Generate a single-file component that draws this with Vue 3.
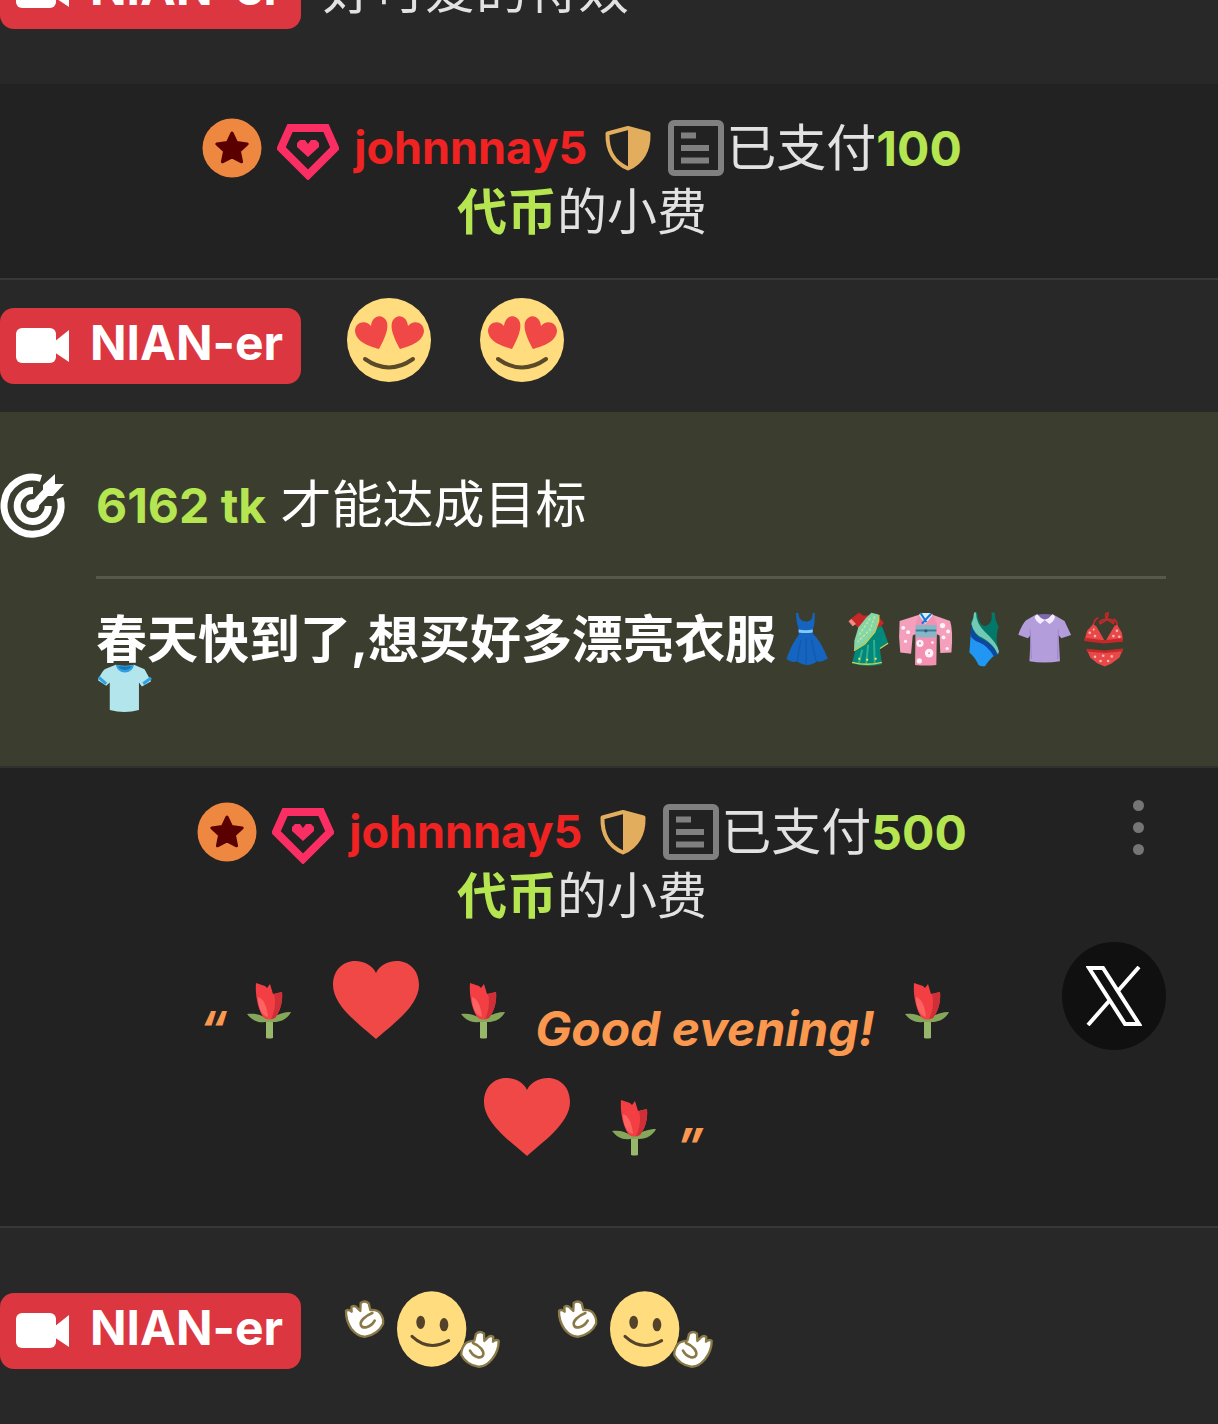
<template>
  <main class="chat">
    <!-- Shared artwork, referenced below through <use> -->
    <svg class="sprite" aria-hidden="true">
      <symbol id="cam" viewBox="0 0 54 36">
        <rect x="0" y="0" width="40" height="35" rx="6" />
        <path d="M38 14 53 2v32L38 24z" />
      </symbol>

      <symbol id="star" viewBox="0 0 60 60">
        <circle cx="30" cy="30" r="29.5" fill="#ee8841" />
        <path
          d="M30 15l4.600 9.600 10.600 1.300-7.800 7.200 2.200 10.700L30 38.800l-9.600 5 2.200-10.700-7.800-7.200 10.600-1.300z"
          fill="#5a0000" stroke="#5a0000" stroke-width="3" stroke-linejoin="round"
        />
      </symbol>

      <symbol id="gem" viewBox="0 0 62 56">
        <path d="M13 4h36l9 20-27 27L4 24z" fill="none" stroke="#fb2e63" stroke-width="8" />
        <path d="M31 33 20 23v-4l3-3h5l3 4 3-4h5l3 3v4z" fill="#fb2e63" />
      </symbol>

      <symbol id="shield" viewBox="0 0 46 46">
        <path d="M23 3 43.500 8.500c.5 16-6 29-20.500 35C8.500 37.500 2 24.500 2.500 8.500z" fill="none" stroke="#e2ae5d" stroke-width="4" stroke-linejoin="round" />
        <path d="M23 2 44 8c.5 17-6 30-21 36z" fill="#e2ae5d" />
      </symbol>

      <symbol id="note" viewBox="0 0 56 56">
        <rect x="3" y="3" width="50" height="50" rx="3" fill="none" stroke="#808080" stroke-width="6" />
        <path d="M13 15.500h15M13 28h28M13 40.500h28" stroke="#808080" stroke-width="6" />
      </symbol>

      <symbol id="love" viewBox="0 0 84 84">
        <circle cx="42" cy="42" r="42" fill="#ffdc7d" />
        <path d="M32 51C22 48 9 44 8 33c0-9 11-12 16-5 1-9 8-12 13-8 8 6 0 22-5 31z" fill="#f04747" />
        <path d="M53 51c10-3 23-7 24-18 0-9-11-12-16-5-1-9-8-12-13-8-8 6 0 22 5 31z" fill="#f04747" />
        <path d="M18 61q24 17 48 0" fill="none" stroke="#5a4a2a" stroke-width="4" stroke-linecap="round" />
      </symbol>

      <symbol id="wave" viewBox="42 58 471 234">
        <ellipse cx="305" cy="175" rx="104" ry="113" fill="#ffdc7d" />
        <ellipse cx="272" cy="155" rx="13" ry="20" fill="#54432a" />
        <ellipse cx="342" cy="162" rx="13" ry="20" fill="#54432a" />
        <path d="M246 197q50 47 110 13" fill="none" stroke="#54432a" stroke-width="9" stroke-linecap="round" />
        <g fill="#fff" stroke="#8a7a48" stroke-width="7" stroke-linejoin="round" stroke-linecap="round">
          <path d="M48 120q8-5 17 3l-1-14q10-7 19 4l8 8 1-24q13-10 24 1l5 20q20-2 29 9 12 15 9 33-14 30-52 38-22 2-42-22-18-26-17-56z" />
          <path d="M134 150c-11 20-35 26-41 14-5-12 12-28 34-37" fill="none" stroke-width="8" />
          <path d="M506 210q-8-5-17 3l1-14q-10-7-19 4l-8 8-1-22q-13-10-24 1l-5 20q-20 2-27 9-13 15-12 34 14 28 50 35 22 2 42-22 21-26 20-56z" />
          <path d="M420 240c11 20 33 26 39 14 5-12-8-28-30-37" fill="none" stroke-width="8" />
        </g>
      </symbol>

      <symbol id="heart" viewBox="0 0 86 78">
        <path d="M43 78C30 66 0 46 0 24 0 9 10 0 22 0c10 0 18 5 21 12C46 5 54 0 64 0c12 0 22 9 22 24 0 22-30 42-43 54z" fill="#f04747" />
      </symbol>

      <symbol id="tulip" viewBox="0 0 44 56">
        <path d="M19 35h7v20q-3.500 1-7 0z" fill="#97b86a" />
        <path d="M0 31c7-1 13 0 20 5l4 0c6-5 13-7 20-7-3 6-9 10-17 10h-9C10 40 5 37 0 31z" fill="#85a75a" />
        <path d="M9 0l9 3 2 2 3-4 3 10 9-2c1 10-2 20-7 26q-5 3-11 0C11 27 8 12 9 0z" fill="#f33f43" />
        <path d="M27 11l8-2c1 10-2 20-7 26l-4 1c4-8 5-17 3-25z" fill="#cf3038" />
        <path d="M11 14c6 2 9 10 10 20-7-2-10-10-10-20z" fill="#ff6262" />
      </symbol>

      <symbol id="goal" viewBox="0 0 66 66">
        <g fill="none" stroke="#fff">
          <path d="M41 6.400A28.500 28.500 0 1 0 60 26" stroke-width="7" />
          <path d="M33 18.500A15.500 15.500 0 1 0 48.200 34" stroke-width="7" />
          <path d="M33 34 50 16" stroke-width="8" />
        </g>
        <circle cx="32.700" cy="33.700" r="6.500" fill="#fff" />
        <path d="M43 13 55 2v10h9L53 24H43z" fill="#fff" />
      </symbol>

      <symbol id="dress" viewBox="33 63 183 174">
        <path d="M94 68h7c2 20 10 25 24 26 14-1 20-6 20-26h6c0 20 0 35-5 48l-1 14c20 20 34 45 46 77-14 6-20 12-33 8-20 16-40 15-60 0-13 5-23 0-33-7 12-33 20-50 38-75l-2-20c-5-15-6-28-7-45z" fill="#1565c0" />
        <path d="M109 150 98 212M125 145v80M141 150l14 64" stroke="#1259ad" stroke-width="4" fill="none" />
        <path d="M102 118q22 4 43 0v9q-21 4-43 0z" fill="#81c9fa" />
      </symbol>

      <symbol id="sari" viewBox="216 63 183 174">
        <path d="M256 90 286 66 300 76 340 72 362 98 350 112 300 130 276 104z" fill="#c62828" />
        <path d="M254 93 267 108 277 101 263 86z" fill="#f28b82" />
        <path d="M290 150 340 112 356 108 364 128 375 160 350 178 356 224Q310 236 265 222L276 176z" fill="#00897b" />
        <path d="M296 180 286 220M314 165 308 224M332 150 334 222" stroke="#35ae8f" stroke-width="6" />
        <path d="M308 82 324 67 346 72 346 92 334 124 304 160 271 182 272 152 284 112z" fill="#86d5a6" />
        <path d="M334 78 320 118 282 156M320 84 302 112 284 138" stroke="#b9e6a6" stroke-width="5" stroke-dasharray="8 5" fill="none" />
        <path d="M347 74 346 94 334 126 304 162 271 183M265 218Q310 230 356 218M350 176 375 160" stroke="#d3cf4a" stroke-width="4" fill="none" />
        <path d="M284 207h6M308 210h6M334 207h6" stroke="#f2e25a" stroke-width="6" />
      </symbol>

      <symbol id="kimono" viewBox="399 63 183 174">
        <path d="M472 72 410 92Q406 140 412 188L445 192 450 136 462 130zM508 72 564 92Q574 120 568 188L534 190 532 136 518 130z" fill="#f4a0bd" />
        <path d="M470 70 490 74 510 70 524 100 522 226Q490 230 457 226L459 100z" fill="#f291b2" />
        <path d="M474 68H504L510 75 489 101 470 76z" fill="#d6eef8" />
        <path d="M474 68 492 96M506 70 478 100" stroke="#1976d2" stroke-width="6" />
        <path d="M459 104h63v38h-63z" fill="#87b6c9" />
        <path d="M459 121h63" stroke="#407d96" stroke-width="6" />
        <circle cx="490" cy="122" r="5" fill="#2b6076" />
        <g fill="#fff3f7">
          <circle cx="421" cy="113" r="6" /><circle cx="436" cy="126" r="6" /><circle cx="428" cy="154" r="5" />
          <circle cx="541" cy="106" r="8" /><circle cx="558" cy="124" r="6" /><circle cx="544" cy="142" r="6" />
          <circle cx="472" cy="160" r="11" /><circle cx="500" cy="190" r="13" /><circle cx="470" cy="214" r="8" />
          <circle cx="510" cy="158" r="4" /><circle cx="555" cy="176" r="5" />
        </g>
        <g fill="#ee7fa5">
          <circle cx="472" cy="160" r="3" /><circle cx="500" cy="190" r="3" />
        </g>
      </symbol>

      <symbol id="swim" viewBox="582 63 183 174">
        <path d="M637 66h10c2 20 6 37 23 42 18-5 24-20 20-42h10q2 30 12 42-10 30-4 58l5 18q-30 25-42 45-10 3-20-3-12-25-28-38l4-42q7-36 0-50 9-14 10-30z" fill="#00796b" />
        <path d="M627 130q28 12 50 30l30 30q-26 22-36 39-10 3-20-3-12-25-28-38z" fill="#2196f3" />
        <path d="M628 104q9 32 35 44 32 14 47 48l-12 5q-20-34-45-43-20-8-27-22z" fill="#0d47a1" />
        <path d="M637 66h6q0 32 26 58 40 36 44 61l-3 9q-14-32-45-49-28-12-36-44 8-17 8-35z" fill="#74c9b5" />
      </symbol>

      <symbol id="polo" viewBox="765 63 183 174">
        <path d="M825 73q28 8 55 0l33 19 20 43-30 10-8-10 4 80q-48 8-93 0l4-80-9 10-29-11q12-34 24-44z" fill="#b39ddb" />
        <path d="M808 118l4 90M894 118l-2 90" stroke="#9c84c8" stroke-width="3" />
        <path d="M827 74q25-6 52 0l-5 12h-42z" fill="#7e69ad" />
        <path d="M829 71q10 13 24 18l-14 12q-14-7-17-21zM877 71q-10 13-24 18l14 12q14-7 17-21z" fill="#f5edff" />
      </symbol>

      <symbol id="bikini" viewBox="948 63 183 174">
        <path d="M1000 106Q1004 86 1016 82M1074 106Q1072 90 1062 86M1042 88 1022 100Q1014 90 1042 86L1062 100Q1068 88 1042 86L1046 68Q1034 66 1040 84" fill="none" stroke="#c62828" stroke-width="5" />
        <path d="M1000 102 1010 108 1034 150 974 150 982 122zM1066 106 1074 104 1088 128 1091 150 1040 150z" fill="#e84848" />
        <path d="M974 148 1032 156 1091 150" stroke="#c62828" stroke-width="10" fill="none" />
        <path d="M980 178 1036 184 1092 177 1080 204 1056 222 1036 231 1014 222 992 204z" fill="#e84848" />
        <path d="M981 181 1036 186 1091 180" stroke="#c62828" stroke-width="8" fill="none" />
        <g fill="#ffb3b3">
          <circle cx="990" cy="128" r="4" /><circle cx="1006" cy="138" r="4" /><circle cx="1002" cy="118" r="3" />
          <circle cx="1062" cy="138" r="4" /><circle cx="1073" cy="122" r="4" /><circle cx="1080" cy="140" r="4" />
          <circle cx="1006" cy="201" r="4" /><circle cx="1031" cy="198" r="4" /><circle cx="1057" cy="200" r="4" />
          <circle cx="1023" cy="214" r="4" /><circle cx="1046" cy="214" r="4" />
        </g>
      </symbol>

      <symbol id="tee" viewBox="288 602 183 174">
        <path d="M348 612q28 8 56 0l32 14 20 36-28 16-9-12v84q-44 12-89 0v-84l-11 10-25-17q14-32 24-35z" fill="#b3e5ec" />
        <path d="M296 650 319 670M456 652 432 670" stroke="#29a3e3" stroke-width="9" />
        <path d="M348 612q28 6 56 0-4 22-28 24-23-2-28-24z" fill="#2f9fe0" />
        <path d="M356 616q20 4 40 0-4 11-20 12-16-1-20-12z" fill="#1976b8" />
      </symbol>
    </svg>

    <article class="message message--tall message--first">
      <button class="badge" type="button">
        <svg class="badge-icon"><use href="#cam" /></svg>
        <span class="badge-name">{{ host }}</span>
      </button>
      <p class="message-text">好可爱的特效</p>
    </article>

    <template v-for="tip in tips" :key="tip.amount">
      <article class="tip">
        <p class="tip-line">
          <svg class="icon-star"><use href="#star" /></svg>
          <svg class="icon-gem"><use href="#gem" /></svg>
          <a class="tip-user" href="#">{{ tip.user }}</a>
          <svg class="icon-shield"><use href="#shield" /></svg>
          <svg class="icon-note"><use href="#note" /></svg>
          <span>已支付<b class="tokens">{{ tip.amount }}</b></span>
        </p>
        <p class="tip-line"><b class="tokens tokens--word">代币</b>的小费</p>

        <div v-if="tip.note" class="quote">
          <p class="quote-line quote-line--first">
            <span>“</span>
            <svg class="tulip quote-tulip"><use href="#tulip" /></svg>
            <svg class="heart"><use href="#heart" /></svg>
            <svg class="tulip"><use href="#tulip" /></svg>
            <span class="quote-text">{{ tip.note }}</span>
            <svg class="tulip"><use href="#tulip" /></svg>
          </p>
          <p class="quote-line quote-line--last">
            <svg class="heart"><use href="#heart" /></svg>
            <svg class="tulip"><use href="#tulip" /></svg>
            <span class="quote-end">”</span>
          </p>
        </div>

        <template v-if="tip.note">
          <button class="menu" type="button" aria-label="Menu">
            <i class="menu-dot" v-for="n in 3" :key="n"></i>
          </button>
          <button class="share" type="button" aria-label="X">
            <svg class="share-icon" viewBox="0 0 56 60">
              <path d="M3 2h14l36 56H39z" fill="none" stroke="#fff" stroke-width="4" />
              <path d="M53 1 31 26M24 34 2 59" stroke="#fff" stroke-width="4" />
            </svg>
          </button>
        </template>
      </article>

      <template v-if="!tip.note">
        <article class="message">
          <button class="badge" type="button">
            <svg class="badge-icon"><use href="#cam" /></svg>
            <span class="badge-name">{{ host }}</span>
          </button>
          <div class="loves">
            <svg class="love" v-for="n in 2" :key="n"><use href="#love" /></svg>
          </div>
        </article>

        <section class="goal">
          <svg class="goal-icon"><use href="#goal" /></svg>
          <div class="goal-body">
            <p class="goal-left"><b class="tokens">6162 tk</b> 才能达成目标</p>
            <hr class="goal-rule" />
            <h2 class="goal-title">春天快到了,想买好多漂亮衣服<svg v-for="c in clothes" :key="c" class="cloth"><use :href="'#' + c" /></svg></h2>
          </div>
        </section>
      </template>
    </template>

    <article class="message message--tall">
      <button class="badge" type="button">
        <svg class="badge-icon"><use href="#cam" /></svg>
        <span class="badge-name">{{ host }}</span>
      </button>
      <div class="waves">
        <svg class="wave" v-for="n in 2" :key="n"><use href="#wave" /></svg>
      </div>
    </article>
  </main>
</template>

<script setup>
const host = 'NIAN-er'

const tips = [
  { user: 'johnnnay5', amount: 100 },
  { user: 'johnnnay5', amount: 500, note: 'Good evening!' },
]

const clothes = ['dress', 'sari', 'kimono', 'swim', 'polo', 'bikini', 'tee']
</script>

<style>
body {
  margin: 0;
  background: #282828;
}
</style>

<style scoped>
.chat {
  overflow: hidden;
  background: #282828;
  color: #e2e2e2;
  font-family: Inter, 'Noto Sans CJK SC', sans-serif;
  font-size: 50px;
  line-height: 64px;
}

.sprite {
  position: absolute;
  width: 0;
  height: 0;
}

p, h2 { margin: 0; }
svg { flex-shrink: 0; }

button {
  border: 0;
  padding: 0;
  font: inherit;
  cursor: pointer;
}

/* short line box, so the smaller digits don't stretch their row */
.tokens {
  color: #b5e550;
  font-size: 48px;
  font-weight: 700;
  line-height: 48px;
}
.tokens--word {
  font-size: 50px;
  line-height: 64px;
}

/* ── Messages ── */
.message {
  display: flex;
  align-items: center;
  padding: 28px 0;
}
.message--tall { padding: 65px 0 55px; }

/* oldest message is scrolled partly out of view */
.message--first { margin-top: -112px; }

.message-text {
  margin-left: 22px;
  font-size: 51px;
}

.badge {
  display: flex;
  align-items: center;
  gap: 20px;
  height: 76px;
  padding: 0 18px 0 16px;
  border-radius: 14px;
  background: #dc3640;
  color: #fff;
}
.badge-icon {
  width: 54px;
  height: 36px;
  fill: #fff;
}
.badge-name {
  padding-bottom: 6px;
  font-size: 48px;
  font-weight: 700;
}

.loves {
  display: flex;
  gap: 49px;
  margin: -12px 0 0 46px;
}
.love {
  width: 84px;
  height: 84px;
  margin: -6px 0;
}

.waves {
  display: flex;
  gap: 56px;
  margin: -4px 0 0 43px;
}
.wave {
  width: 157px;
  height: 78px;
}

/* ── Tips ── */
.tip {
  position: relative;
  padding: 32px 54px 34px 0;
  border-bottom: 2px solid #383838;
  background: #222;
}
.tip-line {
  display: flex;
  align-items: center;
  justify-content: center;
}
.tip-user {
  margin: 0 18px 0 15px;
  color: #f02222;
  font-size: 45px;
  font-weight: 700;
  text-decoration: none;
}
.icon-star {
  width: 60px;
  height: 60px;
  margin-right: 15px;
}
.icon-gem {
  width: 62px;
  height: 56px;
  margin-top: 8px;
}
.icon-shield {
  width: 46px;
  height: 46px;
  margin-right: 17px;
}
.icon-note {
  width: 56px;
  height: 56px;
  margin-right: 2px;
}

.quote {
  margin: 14px 0 16px;
  color: #fa9850;
  font-size: 48px;
  font-style: italic;
  font-weight: 700;
  line-height: 60px;
}
.quote-line {
  display: flex;
  align-items: flex-end;
  justify-content: center;
  height: 117px;
}
.quote-line--first { padding-right: 16px; }
.heart {
  width: 86px;
  height: 78px;
  margin: 0 42px 20px;
}
.quote-line--last .heart { margin-left: 24px; }
.tulip {
  width: 44px;
  height: 56px;
  margin-bottom: 20px;
}
.quote-tulip { margin-left: 20px; }
.quote-text { margin: 0 30px; }
.quote-end { margin-left: 20px; }

.menu {
  position: absolute;
  top: 32px;
  right: 74px;
  display: flex;
  flex-direction: column;
  gap: 11px;
  background: none;
}
.menu-dot {
  width: 11px;
  height: 11px;
  border-radius: 50%;
  background: #757575;
}

.share {
  position: absolute;
  top: 174px;
  right: 52px;
  display: flex;
  align-items: center;
  justify-content: center;
  width: 104px;
  height: 108px;
  border-radius: 50%;
  background: #101010;
}
.share-icon {
  width: 56px;
  height: 60px;
}

/* ── Goal ── */
.goal {
  display: flex;
  gap: 30px;
  padding: 60px 52px 51px 0;
  border-bottom: 2px solid #303030;
  background: #3b3e2f;
  color: #fff;
}
.goal-icon {
  width: 66px;
  height: 66px;
}
.goal-body {
  flex: 1;
  min-width: 0;
}
.goal-left {
  font-size: 51px;
  line-height: 66px;
}
.goal-rule {
  height: 3px;
  margin: 38px 0 36px;
  border: 0;
  background: #58594d;
}
.goal-title {
  font-size: 51px;
  font-weight: 700;
  line-height: 50px;
}
.cloth {
  width: 60px;
  height: 58px;
  margin: -4px 0;
  vertical-align: top;
}
</style>
